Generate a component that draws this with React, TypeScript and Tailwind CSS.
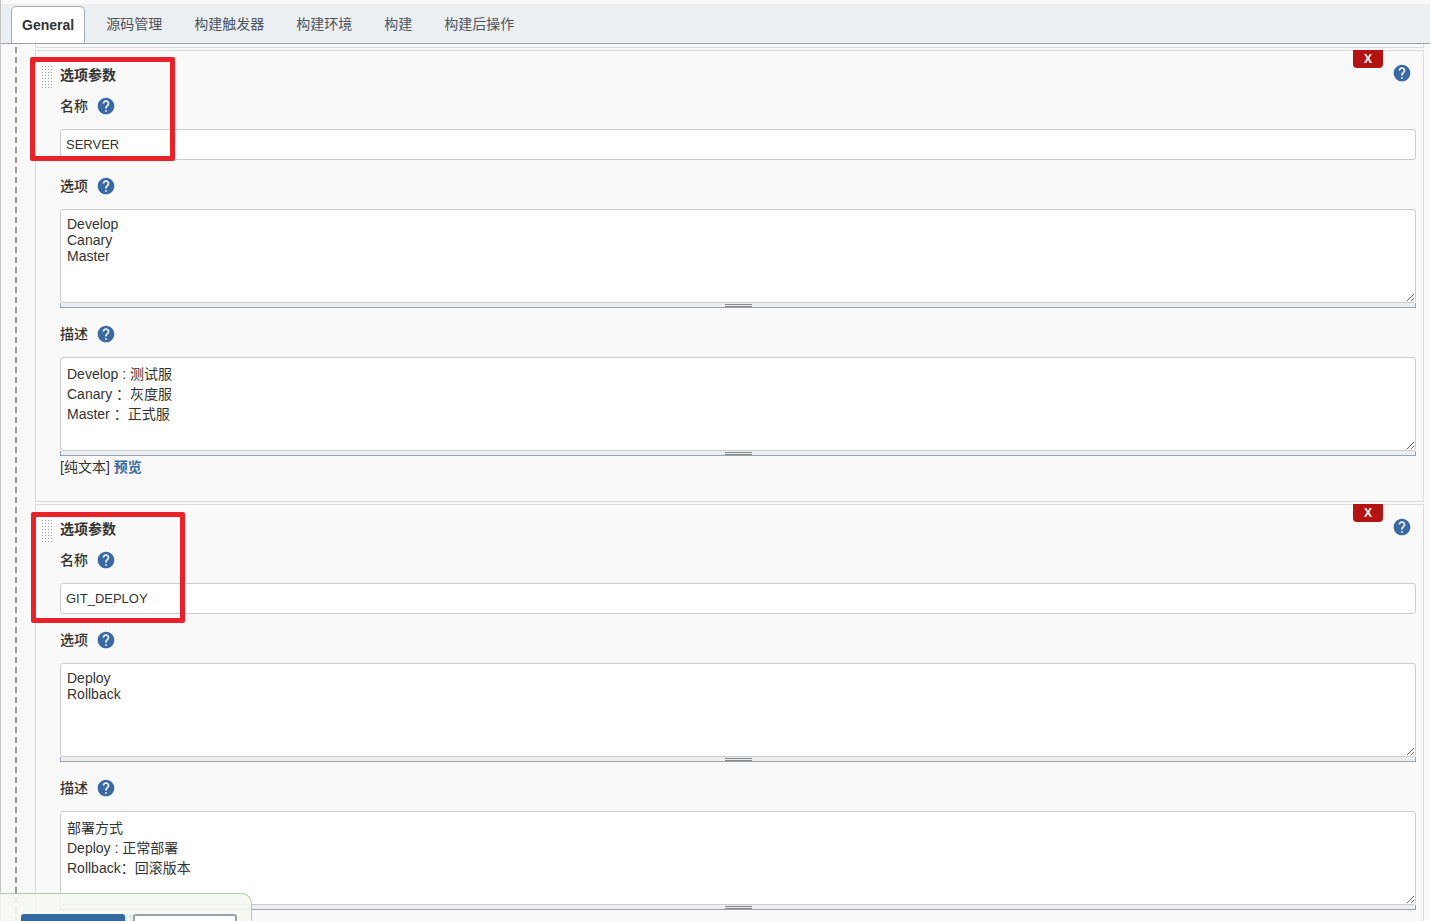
const tabs = ["General", "源码管理", "构建触发器", "构建环境", "构建", "构建后操作"];

const parameters = [
  {
    id: "server",
    name: "SERVER",
    choices: "Develop\nCanary\nMaster",
    description: "Develop : 测试服\nCanary ：灰度服\nMaster ：正式服",
    highlight: "-left-1.5 top-1.5 w-[145px] h-[104px]",
  },
  {
    id: "git-deploy",
    name: "GIT_DEPLOY",
    choices: "Deploy\nRollback",
    description: "部署方式\nDeploy : 正常部署\nRollback：回滚版本",
    highlight: "-left-[5px] top-[7px] w-[154px] h-[111px]",
  },
];

const HelpButton = ({ label }: { label: string }) => (
  <button type="button" aria-label={label} className="block size-5 shrink-0 text-[#3a6aa3]">
    <svg viewBox="0 0 24 24" className="size-5" fill="currentColor">
      <circle cx="12" cy="12" r="9" fill="#fff" />
      <path d="M12 2C6.48 2 2 6.48 2 12s4.48 10 10 10 10-4.48 10-10S17.52 2 12 2zm1 17h-2v-2h2v2zm2.07-7.75l-.9.92C13.45 12.9 13 13.5 13 15h-2v-.5c0-1.1.45-2.1 1.17-2.83l1.24-1.26c.37-.36.59-.86.59-1.41 0-1.1-.9-2-2-2s-2 .9-2 2H8c0-2.21 1.79-4 4-4s4 1.79 4 4c0 .88-.36 1.68-.93 2.25z" />
    </svg>
  </button>
);

const FieldLabel = ({ htmlFor, text }: { htmlFor: string; text: string }) => (
  <div className="flex h-6 items-center gap-2 mb-[11px]">
    <label htmlFor={htmlFor} className="font-medium">{text}</label>
    <HelpButton label={`${text} 帮助`} />
  </div>
);

const TextArea = ({ id, value, lineHeight }: { id: string; value: string; lineHeight: string }) => (
  <>
    <textarea
      id={id}
      defaultValue={value}
      spellCheck={false}
      className={`block w-full h-[94px] resize-y rounded-[3px] border border-[#ccc] bg-white p-1.5 outline-none ${lineHeight}`}
    />
    {/* Drag bar under the text box */}
    <div className="flex h-[5px] justify-center border border-t-0 border-[#9aa3ab] bg-[#ebeff2] pt-px">
      <div className="h-[3px] w-[27px] border-y border-[#888]"></div>
    </div>
  </>
);

const ParameterCard = ({ param }: { param: (typeof parameters)[number] }) => (
  <section className="relative flex border border-[#dcdcdc] pt-3 pb-[23px] pl-[5px] pr-[7px]">
    <div className="mt-0.5 mr-[7px] h-[25px] w-3 shrink-0 cursor-move bg-[radial-gradient(circle,#a3a3a3_1px,transparent_1px)] bg-[size:3px_3px]"></div>

    <div className="min-w-0 flex-1">
      <div className="mb-[7px] flex h-6 items-start justify-between pr-1">
        <h2 className="font-bold leading-6">选项参数</h2>
        <HelpButton label="选项参数 帮助" />
      </div>

      <div className="flex flex-col gap-[14px]">
        <div>
          <FieldLabel htmlFor={`${param.id}-name`} text="名称" />
          <input
            id={`${param.id}-name`}
            type="text"
            defaultValue={param.name}
            spellCheck={false}
            className="block h-[31px] w-full rounded-[3px] border border-[#ccc] bg-white px-[5px] text-[13px] outline-none"
          />
        </div>
        <div>
          <FieldLabel htmlFor={`${param.id}-choices`} text="选项" />
          <TextArea id={`${param.id}-choices`} value={param.choices} lineHeight="leading-4" />
        </div>
        <div>
          <FieldLabel htmlFor={`${param.id}-description`} text="描述" />
          <TextArea id={`${param.id}-description`} value={param.description} lineHeight="leading-5" />
          <div className="h-[22px] leading-[22px]">
            [纯文本] <a href="#preview" className="font-bold text-[#3a6aa3]">预览</a>
          </div>
        </div>
      </div>
    </div>

    <button
      type="button"
      className="absolute -top-px right-10 h-[18px] w-[30px] rounded-b-[4px] bg-[#b31312] text-xs font-bold text-white"
    >
      X
    </button>
    <div className={`pointer-events-none absolute rounded-[2px] border-5 border-[#e92129] ${param.highlight}`}></div>
  </section>
);

const App = () => {
  return (
    <div className="flex h-screen flex-col overflow-hidden border-l border-[#c4c4c4] bg-[#f9f9f9] pt-1 font-['Liberation_Sans','Noto_Sans_CJK_SC',sans-serif] text-sm text-[#333]">
      <nav className="flex h-10 shrink-0 items-end gap-2.5 border-b border-[#9aa3ab] bg-[#ebeff2] pl-2.5">
        {tabs.map((tab, index) => (
          <button
            key={tab}
            type="button"
            className={
              index === 0
                ? "h-[37px] rounded-t-[5px] border border-b-0 border-[#a5adb3] bg-white px-2.5 font-bold"
                : "h-[37px] border border-b-0 border-transparent px-2.5 pb-0.5 text-[#4d545d]"
            }
          >
            {tab}
          </button>
        ))}
      </nav>

      <main className="flex min-h-0 flex-1 overflow-y-auto pr-1.5 [scrollbar-width:none]">
        <div className="mr-[18px] ml-3.5 h-[912px] w-0.5 shrink-0 bg-[repeating-linear-gradient(to_bottom,transparent_0_3px,#999_3px_9px,transparent_9px_10px)]"></div>
        <div className="flex min-w-0 flex-1 flex-col gap-0.5">
          {/* Tail of the parameter above */}
          <div className="h-1 shrink-0 border border-t-0 border-[#dcdcdc]"></div>
          {parameters.map((param) => (
            <ParameterCard key={param.id} param={param} />
          ))}
        </div>
      </main>

      {/* Sticky save bar */}
      <footer className="fixed bottom-0 left-0 flex h-7 w-[252px] items-stretch gap-2 rounded-tr-[10px] border-t border-r border-[#b5c5b9] bg-[#f5f9f0]/85 pt-5 pl-[21px]">
        <button type="button" aria-label="保存" className="w-[104px] rounded-t-[3px] bg-[#34699f]"></button>
        <button type="button" aria-label="应用" className="w-[104px] rounded-t-[3px] border-2 border-b-0 border-[#9aa3ab] bg-white"></button>
      </footer>
    </div>
  );
};

export default App;
